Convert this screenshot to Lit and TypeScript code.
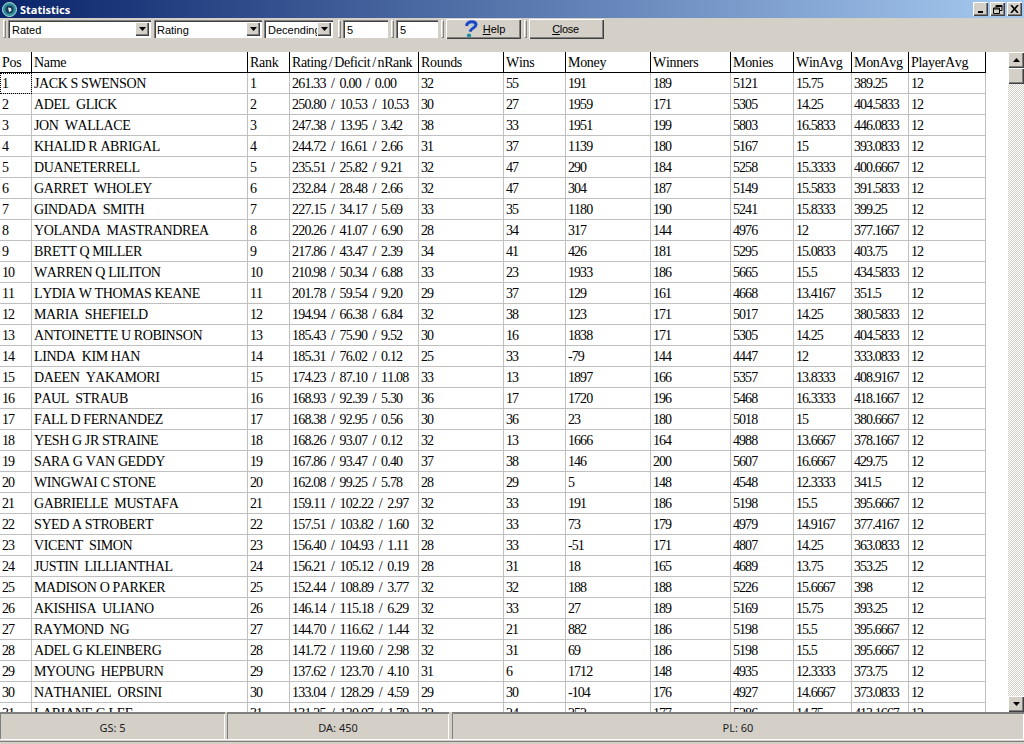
import { LitElement, html, css, svg } from "lit";
import { customElement } from "lit/decorators.js";

const widths = [32, 216, 42, 129, 85, 62, 85, 80, 63, 58, 57, 77];
const heads = ["Pos", "Name", "Rank", "Rating / Deficit / nRank", "Rounds", "Wins", "Money", "Winners", "Monies", "WinAvg", "MonAvg", "PlayerAvg"];
const raw = `JACK S SWENSON|261.33|0.00|0.00|32|55|191|189|5121|15.75|389.25
ADEL  GLICK|250.80|10.53|10.53|30|27|1959|171|5305|14.25|404.5833
JON  WALLACE|247.38|13.95|3.42|38|33|1951|199|5803|16.5833|446.0833
KHALID R ABRIGAL|244.72|16.61|2.66|31|37|1139|180|5167|15|393.0833
DUANETERRELL|235.51|25.82|9.21|32|47|290|184|5258|15.3333|400.6667
GARRET  WHOLEY|232.84|28.48|2.66|32|47|304|187|5149|15.5833|391.5833
GINDADA  SMITH|227.15|34.17|5.69|33|35|1180|190|5241|15.8333|399.25
YOLANDA  MASTRANDREA|220.26|41.07|6.90|28|34|317|144|4976|12|377.1667
BRETT Q MILLER|217.86|43.47|2.39|34|41|426|181|5295|15.0833|403.75
WARREN Q LILITON|210.98|50.34|6.88|33|23|1933|186|5665|15.5|434.5833
LYDIA W THOMAS KEANE|201.78|59.54|9.20|29|37|129|161|4668|13.4167|351.5
MARIA  SHEFIELD|194.94|66.38|6.84|32|38|123|171|5017|14.25|380.5833
ANTOINETTE U ROBINSON|185.43|75.90|9.52|30|16|1838|171|5305|14.25|404.5833
LINDA  KIM HAN|185.31|76.02|0.12|25|33|-79|144|4447|12|333.0833
DAEEN  YAKAMORI|174.23|87.10|11.08|33|13|1897|166|5357|13.8333|408.9167
PAUL  STRAUB|168.93|92.39|5.30|36|17|1720|196|5468|16.3333|418.1667
FALL D FERNANDEZ|168.38|92.95|0.56|30|36|23|180|5018|15|380.6667
YESH G JR STRAINE|168.26|93.07|0.12|32|13|1666|164|4988|13.6667|378.1667
SARA G VAN GEDDY|167.86|93.47|0.40|37|38|146|200|5607|16.6667|429.75
WINGWAI C STONE|162.08|99.25|5.78|28|29|5|148|4548|12.3333|341.5
GABRIELLE  MUSTAFA|159.11|102.22|2.97|32|33|191|186|5198|15.5|395.6667
SYED A STROBERT|157.51|103.82|1.60|32|33|73|179|4979|14.9167|377.4167
VICENT  SIMON|156.40|104.93|1.11|28|33|-51|171|4807|14.25|363.0833
JUSTIN  LILLIANTHAL|156.21|105.12|0.19|28|31|18|165|4689|13.75|353.25
MADISON O PARKER|152.44|108.89|3.77|32|32|188|188|5226|15.6667|398
AKISHISA  ULIANO|146.14|115.18|6.29|32|33|27|189|5169|15.75|393.25
RAYMOND  NG|144.70|116.62|1.44|32|21|882|186|5198|15.5|395.6667
ADEL G KLEINBERG|141.72|119.60|2.98|32|31|69|186|5198|15.5|395.6667
MYOUNG  HEPBURN|137.62|123.70|4.10|31|6|1712|148|4935|12.3333|373.75
NATHANIEL  ORSINI|133.04|128.29|4.59|29|30|-104|176|4927|14.6667|373.0833
LARIANE G LEE|131.25|130.07|1.79|32|24|252|177|5286|14.75|413.1667`;

const rows = raw.split("\n").map((l, i) => {
  const p = l.split("|");
  return [String(i + 1), p[0], String(i + 1), `${p[1]}  /  ${p[2]}  /  ${p[3]}`, p[4], p[5], p[6], p[7], p[8], p[9], p[10], "12"];
});

const arrow = (down: boolean) =>
  svg`<svg width="7" height="4" viewBox="0 0 7 4"><path fill="#000" d="${down ? "M0 0h7L3.5 4z" : "M0 4h7L3.5 0z"}"/></svg>`;

@customElement("app-root")
export class AppRoot extends LitElement {
  static styles = css`
    :host { display: flex; flex-direction: column; width: 1024px; height: 744px; overflow: hidden; background: #d4d0c8; font-family: "Liberation Sans", Arial, sans-serif; }
    .title { height: 18px; flex: none; display: flex; align-items: center; background: linear-gradient(90deg, #0a246a 0%, #a6caf0 100%); padding: 0 2px; box-sizing: border-box; }
    .title .logo { flex: none; }
    .title .label { font: bold 11px "Noto Sans", sans-serif; color: #fff; margin-left: 3px; flex: 1; }
    .wbtn { width: 15px; height: 14px; box-sizing: border-box; background: #d4d0c8; box-shadow: inset 1px 1px 0 #fff, inset -1px -1px 0 #404040, inset -2px -2px 0 #808080; display: flex; align-items: center; justify-content: center; margin-left: 2px; }
    .toolbar { height: 34px; flex: none; display: flex; align-items: flex-start; padding: 2px 0 0 3px; box-sizing: border-box; }
    .grip { width: 3px; height: 18px; box-sizing: border-box; border-left: 1px solid #fff; border-top: 1px solid #fff; border-right: 1px solid #808080; border-bottom: 1px solid #808080; flex: none; }
    .field { height: 18px; box-sizing: border-box; background: #fff; box-shadow: inset 1px 1px 0 #808080, inset 2px 2px 0 #404040, inset -1px -1px 0 #fff; display: flex; align-items: center; font-size: 11px; color: #000; padding: 1px 0 0 4px; flex: none; overflow: hidden; position: relative; }
    .drop { position: absolute; right: 2px; top: 2px; width: 14px; height: 14px; background: #d4d0c8; box-shadow: inset 1px 1px 0 #fff, inset -1px -1px 0 #404040, inset -2px -2px 0 #808080; display: flex; align-items: center; justify-content: center; }
    .c1 { width: 143px; margin-left: 2px; } .c2 { width: 108px; margin-left: 3px; padding-left: 3px; } .c3 { width: 69px; margin-left: 2px; }
    .i1 { width: 45px; margin-left: 2px; } .i2 { width: 42px; margin-left: 2px; }
    .g2 { margin-left: 5px; } .g3 { margin-left: 3px; } .g4 { margin-left: 3px; } .g5 { margin-left: 3px; }
    .btn { height: 20px; margin-top: -1px; box-sizing: border-box; background: #d4d0c8; box-shadow: inset 1px 1px 0 #fff, inset -1px -1px 0 #404040, inset -2px -2px 0 #808080; display: flex; align-items: center; justify-content: center; font-size: 11px; color: #000; flex: none; }
    .btn u { text-decoration: underline; }
    .help { width: 75px; margin-left: 2px; gap: 5px; padding-left: 2px; }
    .close { width: 75px; margin-left: 2px; letter-spacing: -0.3px; padding-right: 2px; }
    .main { height: 660px; flex: none; display: flex; background: #fff; }
    .grid { flex: 1; overflow: hidden; min-width: 0; }
    table { border-collapse: separate; border-spacing: 0; table-layout: fixed; width: 986px; }
    th, td { height: 21px; box-sizing: border-box; padding: 2px 0 0 2px; text-align: left; font: normal 14px "Liberation Serif", serif; font-kerning: none; color: #000; white-space: pre; overflow: hidden; line-height: 18px; }
    th { border-right: 1px solid #000; border-bottom: 1px solid #000; letter-spacing: -0.3px; }
    th.wide { word-spacing: -1.2px; letter-spacing: -0.4px; padding-left: 2px; overflow: visible; }
    td { border-right: 1px solid #c0c0c0; border-bottom: 1px solid #c0c0c0; letter-spacing: -0.95px; }
    td.name { letter-spacing: -0.4px; }
    td.rating { letter-spacing: -0.8px; }
    td.focus { outline: 1px dotted #000; outline-offset: -1px; }
    .sb { width: 16px; flex: none; margin-left: 22px; display: flex; flex-direction: column; background-color: #fff; background-image: conic-gradient(#d4d0c8 25%, #fff 0 50%, #d4d0c8 0 75%, #fff 0); background-size: 2px 2px; }
    .sbb { height: 16px; flex: none; background: #d4d0c8; box-shadow: inset 1px 1px 0 #fff, inset -1px -1px 0 #404040, inset -2px -2px 0 #808080; display: flex; align-items: center; justify-content: center; }
    .thumb { height: 16px; flex: none; background: #d4d0c8; box-shadow: inset 1px 1px 0 #fff, inset -1px -1px 0 #404040, inset -2px -2px 0 #808080; }
    .sp { flex: 1; }
    .status { flex: 1; display: flex; flex-direction: column; }
    .panes { height: 27px; flex: none; display: flex; border-bottom: 1px solid #fff; }
    .rule { height: 2px; margin-top: 1px; flex: none; border-top: 1px solid #808080; border-bottom: 1px solid #fff; }
    .pane { box-sizing: border-box; height: 27px; padding-top: 3px; display: flex; align-items: center; justify-content: center; font: 11px "Noto Sans", sans-serif; color: #222; box-shadow: inset 1px 2px 0 #808080, inset -1px 0 0 #fff; flex: none; }
    .p1 { width: 225px; } .p2 { width: 222px; margin-left: 2px; } .p3 { flex: 1; margin-left: 3px; }
  `;

  render() {
    return html`
      <div class="title">
        <svg class="logo" width="15" height="15" viewBox="0 0 15 15"><circle cx="7.5" cy="7.5" r="7" fill="#2e8f9a" stroke="#b7e0e0"/><circle cx="7.5" cy="7.5" r="4" fill="#173a58"/><path d="M6 5.5l3 .5 .5 3-2.5 1z" fill="#dfe8e8"/></svg>
        <span class="label">Statistics</span>
        <div class="wbtn"><svg width="8" height="8" viewBox="0 0 8 8"><path d="M1 6h5v2H1z" fill="#000"/></svg></div>
        <div class="wbtn"><svg width="10" height="9" viewBox="0 0 10 9"><path d="M3 .5h6v5H7M3 .5v2M3 1.5h6M.5 3h6v5.5H.5zM.5 4h6" fill="none" stroke="#000"/></svg></div>
        <div class="wbtn"><svg width="9" height="8" viewBox="0 0 9 8"><path d="M1 0l7 8M8 0L1 8" stroke="#000" stroke-width="1.6" fill="none"/></svg></div>
      </div>
      <div class="toolbar">
        <div class="grip"></div>
        <div class="field c1">Rated<span class="drop">${arrow(true)}</span></div>
        <div class="field c2">Rating<span class="drop">${arrow(true)}</span></div>
        <div class="field c3">Decending<span class="drop">${arrow(true)}</span></div>
        <div class="grip g2"></div>
        <div class="field i1">5</div>
        <div class="grip g3"></div>
        <div class="field i2">5</div>
        <div class="grip g4"></div>
        <div class="btn help">
          <svg width="14" height="18" viewBox="0 0 14 18"><path d="M2.5 6C3 3 5.5 1.7 8 1.7c2.6 0 4 1.3 4 3 0 2.8-5 3.4-6 7" fill="none" stroke="#1c46c8" stroke-width="3"/><path d="M6 6.5c1-1.5 2.5-2 3.5-2" fill="none" stroke="#5fd0e0" stroke-width="0.8"/><ellipse cx="5" cy="15.4" rx="2.2" ry="1.9" fill="#14939c"/></svg>
          <span><u>H</u>elp</span>
        </div>
        <div class="grip g5"></div>
        <div class="btn close"><span><u>C</u>lose</span></div>
      </div>
      <div class="main">
        <div class="grid">
          <table>
            <colgroup>${widths.map((w) => html`<col style="width:${w}px" />`)}</colgroup>
            <thead><tr>${heads.map((h, j) => html`<th class="${j === 3 ? "wide" : ""}">${h}</th>`)}</tr></thead>
            <tbody>
              ${rows.map((r, i) => html`<tr>${r.map((c, j) => html`<td class="${j === 1 ? "name" : j === 3 ? "rating" : ""} ${i === 0 && j === 0 ? "focus" : ""}">${c}</td>`)}</tr>`)}
            </tbody>
          </table>
        </div>
        <div class="sb">
          <div class="sbb">${arrow(false)}</div>
          <div class="thumb"></div>
          <div class="sp"></div>
          <div class="sbb">${arrow(true)}</div>
        </div>
      </div>
      <div class="status">
        <div class="panes">
          <div class="pane p1">GS: 5</div>
          <div class="pane p2">DA: 450</div>
          <div class="pane p3">PL: 60</div>
        </div>
        <div class="rule"></div>
      </div>
    `;
  }
}
